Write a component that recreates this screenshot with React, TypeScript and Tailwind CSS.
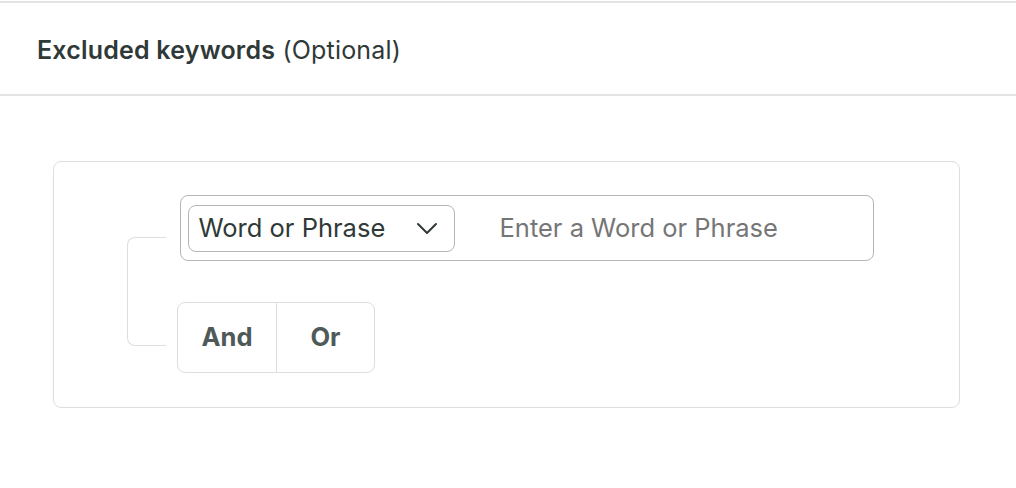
import React, { useState } from "react";

const ChevronDown: React.FC = () => (
    <svg width="22" height="14" viewBox="0 0 22 14" fill="none" stroke="#2f3938" strokeWidth="2" strokeLinecap="round" strokeLinejoin="round">
        <path d="M2 3l9 9 9-9" />
    </svg>
);

const App: React.FC = () => {
    const [keyword, setKeyword] = useState("");
    const [mode, setMode] = useState<"and" | "or" | null>(null);

    return (
        <div className="w-[1016px] h-[488px] bg-white font-['Inter',sans-serif] text-[#2f3938]">
            {/* Header */}
            <div className="mt-px h-[95px] border-y-2 border-[#e4e4e4] flex items-center pl-[37px]">
                <h2 className="text-[25px] leading-none tracking-[0.2px] mt-[4px]">
                    <span className="font-semibold">Excluded keywords</span>{" "}
                    <span className="font-normal">(Optional)</span>
                </h2>
            </div>

            <div className="pl-[53px] pt-[65px]">
                <div className="w-[907px] h-[247px] border border-[#dedede] rounded-lg pt-[33px] flex">
                    {/* Tree connector */}
                    <div className="w-[123px] flex justify-end">
                        <div className="w-[50px]">
                            <div className="mt-[42px] w-[39px] h-[109px] border border-r-0 border-[#dedede] rounded-l-lg" />
                        </div>
                    </div>

                    <div className="flex flex-col">
                        <div className="ml-[3px] w-[694px] h-[66px] border-[1.5px] border-[#b2b7b5] rounded-lg flex items-center pl-[6.5px]">
                            <button className="shrink-0 w-[267px] h-[47px] border-[1.5px] border-[#b2b7b5] rounded-lg flex items-center justify-between pl-[10px] pr-[16px] text-[25.5px] text-[#2f3938]">
                                <span>Word or Phrase</span>
                                <ChevronDown />
                            </button>
                            <input
                                value={keyword}
                                onChange={(e) => setKeyword(e.target.value)}
                                placeholder="Enter a Word or Phrase"
                                className="ml-[45px] min-w-0 flex-1 bg-transparent outline-none text-[25.5px] text-[#2f3938] placeholder:text-[#767676] mt-[1px]"
                            />
                        </div>

                        <div className="mt-[41px] w-[198px] h-[71px] border border-[#dedede] rounded-lg flex overflow-hidden">
                            <button
                                onClick={() => setMode("and")}
                                className={`w-[99px] h-full border-r border-[#dedede] text-[25.5px] font-bold text-[#4e5958] ${mode === "and" ? "bg-gray-100" : ""}`}
                            >
                                And
                            </button>
                            <button
                                onClick={() => setMode("or")}
                                className={`flex-1 h-full text-[25.5px] font-bold text-[#4e5958] ${mode === "or" ? "bg-gray-100" : ""}`}
                            >
                                Or
                            </button>
                        </div>
                    </div>
                </div>
            </div>
        </div>
    );
};

export default App;
